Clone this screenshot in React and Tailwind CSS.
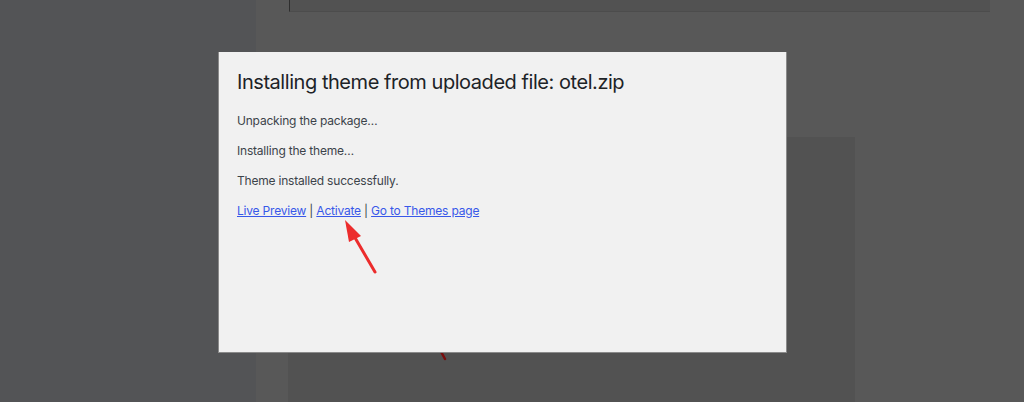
import React from 'react';

const links = ['Live Preview', 'Activate', 'Go to Themes page'];

const App = () => {
  return (
    <div className="relative flex h-[402px] w-[1024px] overflow-hidden bg-[#585858]" style={{ fontFamily: 'Inter, "Liberation Sans", sans-serif' }}>
      <div className="w-[256px] bg-[#535456]" />
      <div className="flex flex-1 flex-col">
        <div className="ml-[33px] mr-[34px] h-[12px] border-b border-l border-b-[#4c4c4c] border-l-[#2e2e2e] bg-[#525252]" />
        <div className="ml-[32px] mt-[125px] w-[567px] flex-1 bg-[#525252]" />
      </div>

      {/* stray arrow stroke under the dialog */}
      <svg className="absolute left-[436px] top-[346px]" width="14" height="18" viewBox="0 0 14 18">
        <line x1="3" y1="2" x2="9" y2="13" stroke="#7a0e0e" strokeWidth="2.5" strokeLinecap="round" />
      </svg>

      {/* dialog */}
      <div className="absolute left-[218px] top-[52px] h-[301px] w-[569px] border-b border-r border-l border-[#8a8a8a] border-t-0 bg-[#f1f1f1] pl-[18px] pt-[16px]">
        <h1 className="text-[20px] font-normal leading-[28px] tracking-[-0.45px] text-[#1d2327]">Installing theme from uploaded file: otel.zip</h1>
        <div className="mt-[15px] flex flex-col gap-[11px] text-[12px] leading-[19px] tracking-[-0.2px] text-[#3c434a]">
          <p>Unpacking the package…</p>
          <p>Installing the theme…</p>
          <p>Theme installed successfully.</p>
          <p>
            {links.map((l, i) => (
              <React.Fragment key={l}>
                {i > 0 && <span> | </span>}
                <a href="#" className="text-[#3858e9] underline">{l}</a>
              </React.Fragment>
            ))}
          </p>
        </div>
      </div>

      {/* annotation arrow */}
      <svg className="absolute left-[335px] top-[214px]" width="50" height="66" viewBox="0 0 50 66">
        <line x1="40" y1="58" x2="19" y2="22" stroke="#ec2c2c" strokeWidth="3" strokeLinecap="round" />
        <polygon points="10,6 26,22 14,28" fill="#ec2c2c" />
      </svg>
    </div>
  );
};

export default App;
